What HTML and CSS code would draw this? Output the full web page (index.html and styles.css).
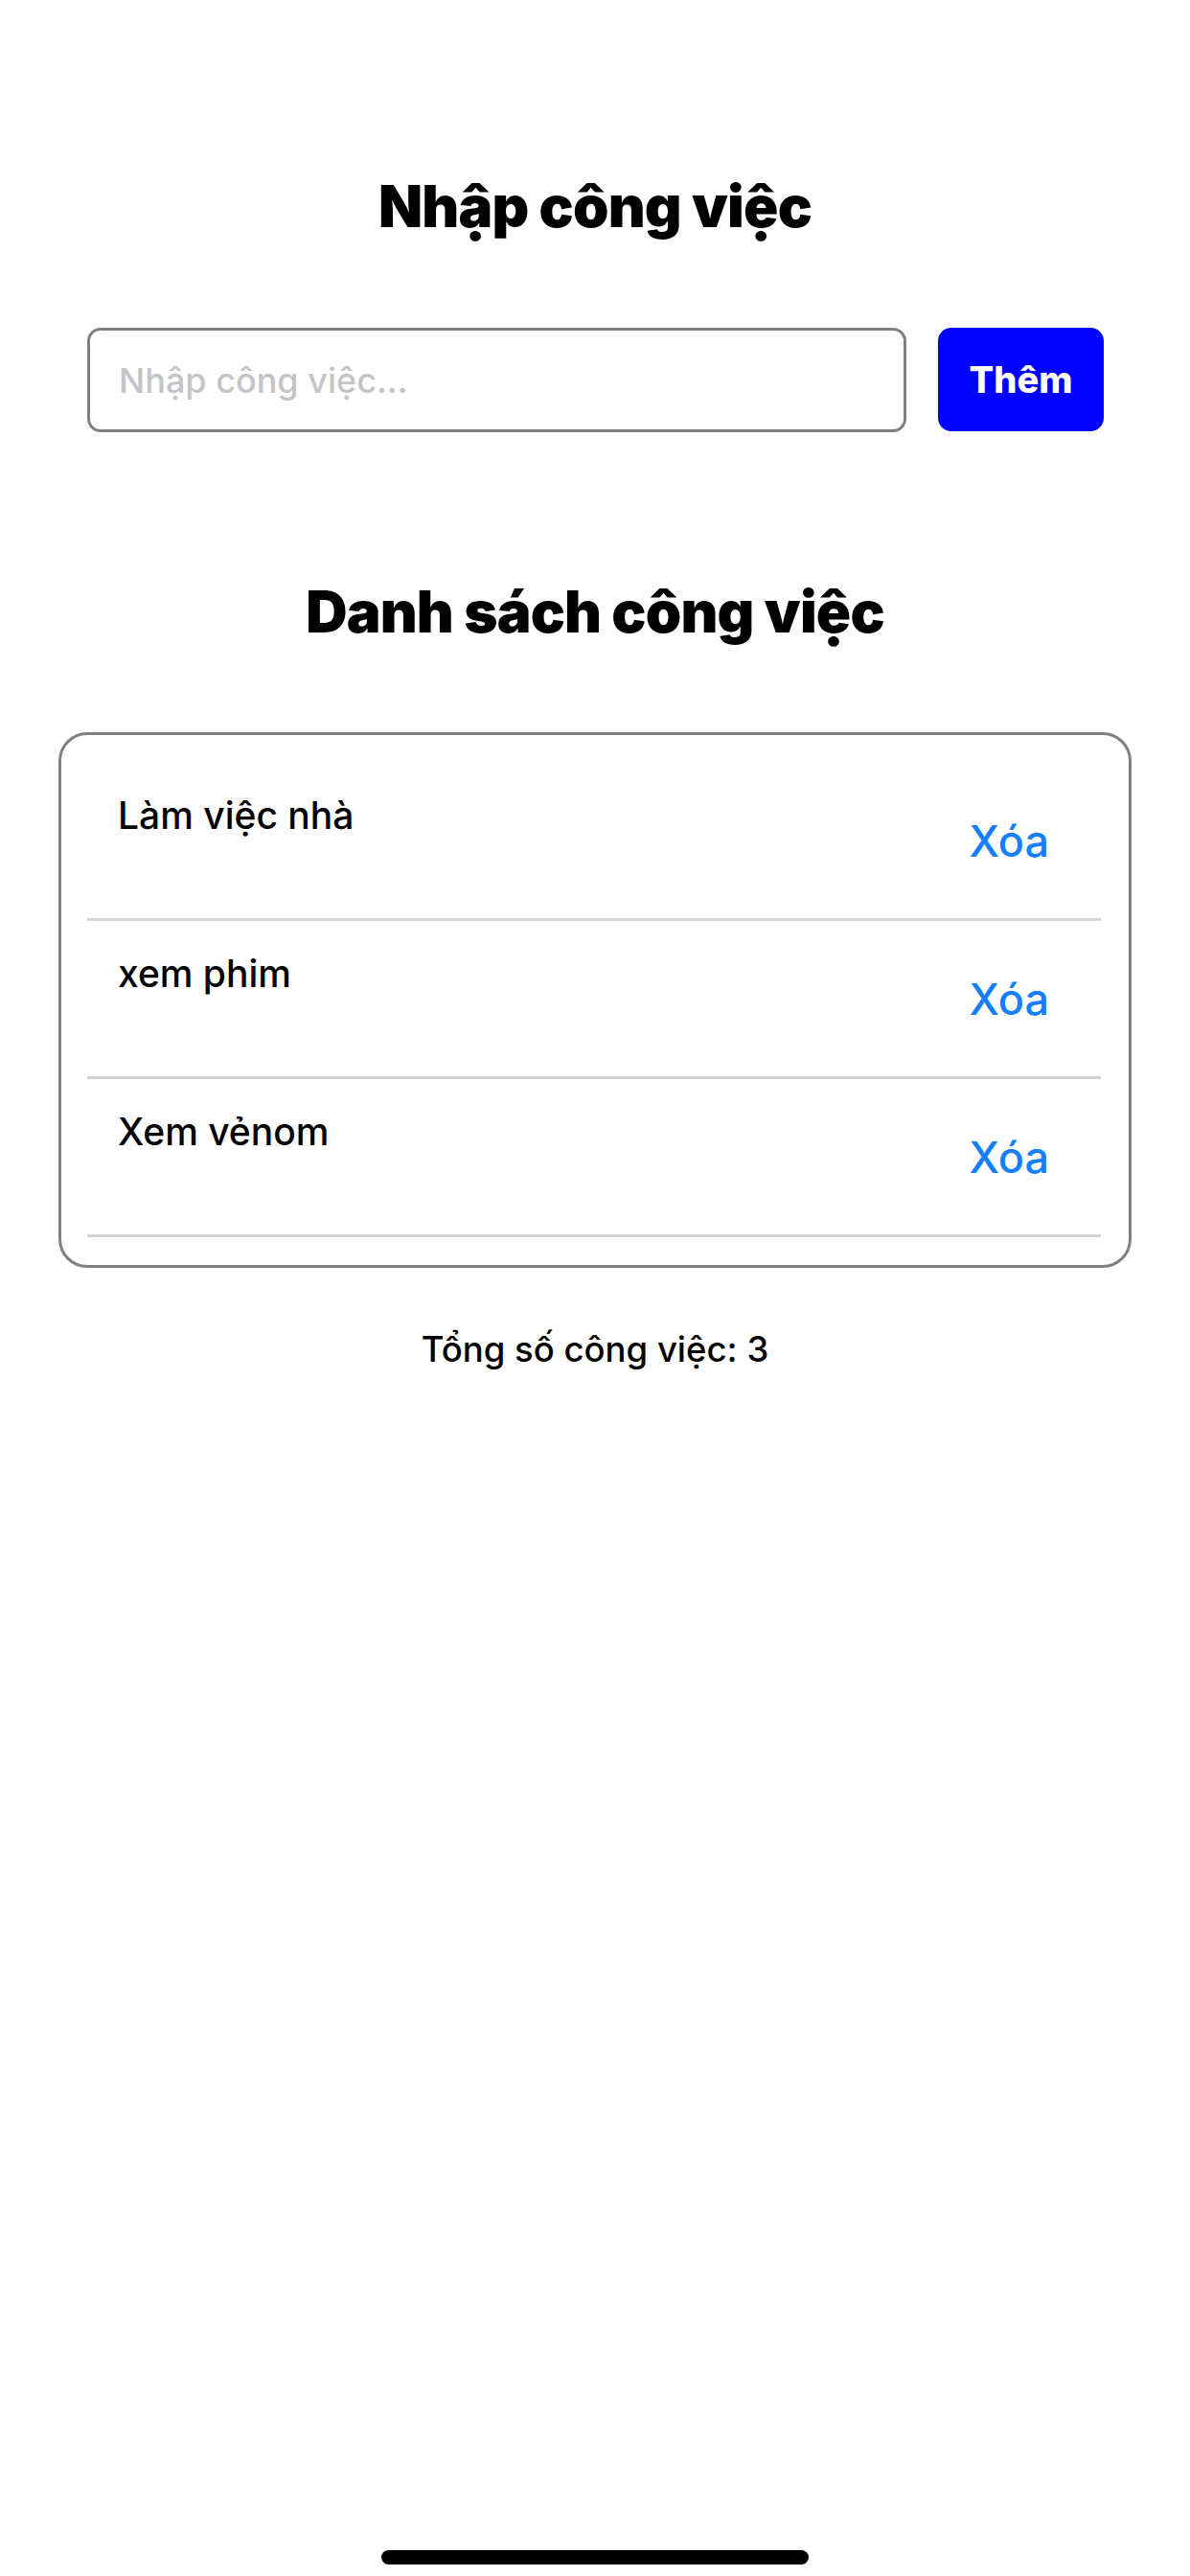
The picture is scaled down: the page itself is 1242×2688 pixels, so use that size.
FILE: index.html
```html
<!DOCTYPE html>
<html lang="vi">
<head>
<meta charset="utf-8">
<title>Nhập công việc</title>
<link rel="stylesheet" href="styles.css">
</head>
<body>
<div class="screen">
  <h1 class="title title-top">Nhập công việc</h1>
  <div class="input-row">
    <div class="input"><span class="placeholder">Nhập công việc...</span></div>
    <div class="add-btn">Thêm</div>
  </div>
  <h2 class="title title-list">Danh sách công việc</h2>
  <div class="list">
    <div class="item">
      <span class="item-text">Làm việc nhà</span>
      <span class="delete">Xóa</span>
    </div>
    <div class="item">
      <span class="item-text">xem phim</span>
      <span class="delete">Xóa</span>
    </div>
    <div class="item">
      <span class="item-text">Xem vẻnom</span>
      <span class="delete">Xóa</span>
    </div>
  </div>
  <p class="total">Tổng số công việc: 3</p>
  <div class="home-indicator"></div>
</div>
</body>
</html>
```
FILE: styles.css
```css
* { box-sizing: border-box; }
html, body { margin: 0; padding: 0; background: #fff; }
body { font-family: Inter, "Noto Sans", "DejaVu Sans", sans-serif; color: #000; }
.screen {
  width: 1242px;
  height: 2688px;
  display: flex;
  flex-direction: column;
  align-items: center;
}
.title {
  margin: 0;
  font-size: 60px;
  line-height: 72px;
  font-weight: 900;
  letter-spacing: -0.8px;
  text-align: center;
}
.title-top { margin-top: 179px; }
.input-row {
  margin-top: 91px;
  width: 100%;
  padding: 0 90px 0 91px;
  display: flex;
  gap: 33px;
}
.input {
  flex: 1;
  height: 109px;
  border: 3px solid #808080;
  border-radius: 14px;
  padding-left: 30px;
  display: flex;
  align-items: center;
}
.placeholder {
  font-size: 36px;
  font-weight: 500;
  color: #c4c4c6;
}
.add-btn {
  width: 173px;
  height: 108px;
  background: #0000ff;
  border-radius: 14px;
  color: #fff;
  font-size: 38px;
  font-weight: 800;
  display: flex;
  align-items: center;
  justify-content: center;
}
.title-list { margin-top: 151px; }
.list {
  margin-top: 90px;
  width: 1120px;
  border: 3px solid #808080;
  border-radius: 30px;
  padding: 29px 29px 29px 27px;
}
.item {
  height: 165px;
  border-bottom: 3px solid #d3d3d3;
  display: flex;
  justify-content: space-between;
  align-items: flex-start;
  padding: 31px 54px 0 32px;
}
.item-text {
  font-size: 39px;
  line-height: 48px;
  font-weight: 500;
}
.delete {
  margin-top: 24px;
  font-size: 45px;
  line-height: 54px;
  font-weight: 500;
  color: #147efb;
}
.total {
  margin: 61px 0 0;
  font-size: 36.5px;
  line-height: 48px;
  font-weight: 500;
}
.home-indicator {
  margin-top: auto;
  margin-bottom: 12px;
  width: 446px;
  height: 15px;
  border-radius: 8px;
  background: #000;
}
```
